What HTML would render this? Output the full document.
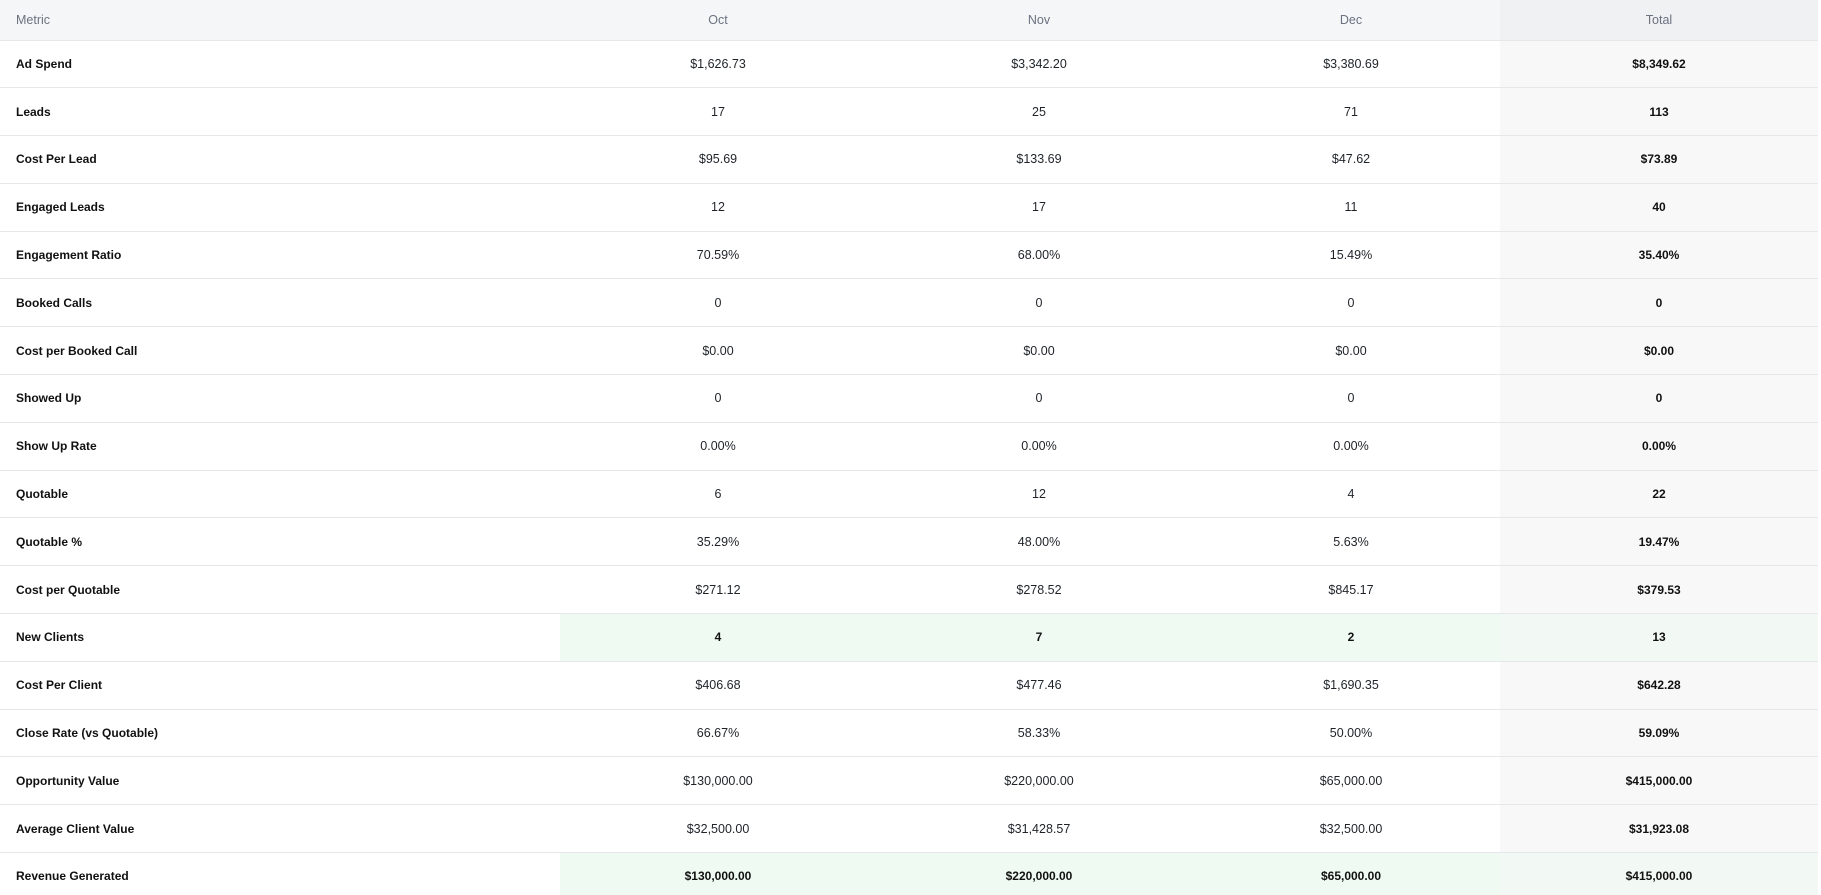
<!DOCTYPE html>
<html><head><meta charset="utf-8"><style>
html,body{margin:0;padding:0;background:#fff;width:1821px;height:895px;overflow:hidden}
table{border-collapse:collapse;width:1818px;table-layout:fixed;font-family:"Liberation Sans",sans-serif;font-size:12.5px;color:#1f2328}
td,th{padding:0;box-sizing:border-box;border-bottom:1px solid #e5e7eb;text-align:center;white-space:nowrap}
th{height:40px;background:#f5f6f8;color:#6b7280;font-weight:normal;font-size:12.5px}
th:first-child{text-align:left;padding-left:16px}
th.t{background:#f0f1f3}
td{height:47.8px}
td:first-child{text-align:left;padding-left:16px;font-weight:bold;font-size:12px;color:#111}
td.t{background:#f8f8f8;font-weight:bold;font-size:12px;color:#111}
tr.g td.v{background:#effbf2;font-weight:bold;font-size:12px;color:#111}
tr.g td.t{background:#f2f8f4}
</style></head><body>
<table>
<colgroup><col style="width:560px"><col style="width:316px"><col style="width:326px"><col style="width:298px"><col style="width:318px"></colgroup>
<tr><th>Metric</th><th>Oct</th><th>Nov</th><th>Dec</th><th class="t">Total</th></tr>
<tr><td>Ad Spend</td><td class="v">$1,626.73</td><td class="v">$3,342.20</td><td class="v">$3,380.69</td><td class="t">$8,349.62</td></tr>
<tr><td>Leads</td><td class="v">17</td><td class="v">25</td><td class="v">71</td><td class="t">113</td></tr>
<tr><td>Cost Per Lead</td><td class="v">$95.69</td><td class="v">$133.69</td><td class="v">$47.62</td><td class="t">$73.89</td></tr>
<tr><td>Engaged Leads</td><td class="v">12</td><td class="v">17</td><td class="v">11</td><td class="t">40</td></tr>
<tr><td>Engagement Ratio</td><td class="v">70.59%</td><td class="v">68.00%</td><td class="v">15.49%</td><td class="t">35.40%</td></tr>
<tr><td>Booked Calls</td><td class="v">0</td><td class="v">0</td><td class="v">0</td><td class="t">0</td></tr>
<tr><td>Cost per Booked Call</td><td class="v">$0.00</td><td class="v">$0.00</td><td class="v">$0.00</td><td class="t">$0.00</td></tr>
<tr><td>Showed Up</td><td class="v">0</td><td class="v">0</td><td class="v">0</td><td class="t">0</td></tr>
<tr><td>Show Up Rate</td><td class="v">0.00%</td><td class="v">0.00%</td><td class="v">0.00%</td><td class="t">0.00%</td></tr>
<tr><td>Quotable</td><td class="v">6</td><td class="v">12</td><td class="v">4</td><td class="t">22</td></tr>
<tr><td>Quotable %</td><td class="v">35.29%</td><td class="v">48.00%</td><td class="v">5.63%</td><td class="t">19.47%</td></tr>
<tr><td>Cost per Quotable</td><td class="v">$271.12</td><td class="v">$278.52</td><td class="v">$845.17</td><td class="t">$379.53</td></tr>
<tr class="g"><td>New Clients</td><td class="v">4</td><td class="v">7</td><td class="v">2</td><td class="t">13</td></tr>
<tr><td>Cost Per Client</td><td class="v">$406.68</td><td class="v">$477.46</td><td class="v">$1,690.35</td><td class="t">$642.28</td></tr>
<tr><td>Close Rate (vs Quotable)</td><td class="v">66.67%</td><td class="v">58.33%</td><td class="v">50.00%</td><td class="t">59.09%</td></tr>
<tr><td>Opportunity Value</td><td class="v">$130,000.00</td><td class="v">$220,000.00</td><td class="v">$65,000.00</td><td class="t">$415,000.00</td></tr>
<tr><td>Average Client Value</td><td class="v">$32,500.00</td><td class="v">$31,428.57</td><td class="v">$32,500.00</td><td class="t">$31,923.08</td></tr>
<tr class="g"><td>Revenue Generated</td><td class="v">$130,000.00</td><td class="v">$220,000.00</td><td class="v">$65,000.00</td><td class="t">$415,000.00</td></tr>
</table>
</body></html>
